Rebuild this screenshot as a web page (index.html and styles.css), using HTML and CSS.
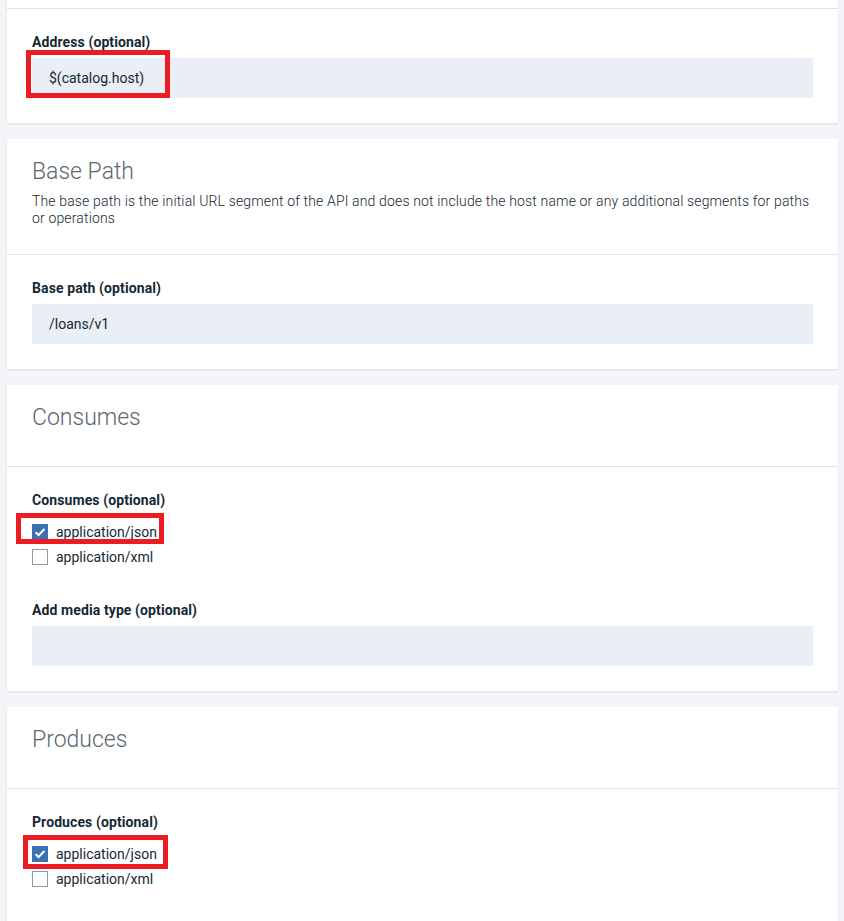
FILE: index.html
```html
<!DOCTYPE html>
<html lang="en">
<head>
<meta charset="utf-8">
<title>API settings</title>
<link rel="stylesheet" href="styles.css">
</head>
<body>
<main class="page">
  <section class="card">
    <div class="card-head stub"></div>
    <div class="card-body">
      <div class="field">
        <label class="label">Address (optional)</label>
        <div class="input-wrap">
          <div class="input">$(catalog.host)</div>
          <span class="mark mark-address"></span>
        </div>
      </div>
    </div>
  </section>

  <section class="card">
    <div class="card-head">
      <h2 class="title">Base Path</h2>
      <p class="desc">The base path is the initial URL segment of the API and does not include the host name or any additional segments for paths or operations</p>
    </div>
    <div class="card-body">
      <div class="field">
        <label class="label">Base path (optional)</label>
        <div class="input-wrap">
          <div class="input">/loans/v1</div>
        </div>
      </div>
    </div>
  </section>

  <section class="card">
    <div class="card-head">
      <h2 class="title">Consumes</h2>
    </div>
    <div class="card-body">
      <div class="field">
        <label class="label label-check">Consumes (optional)</label>
        <div class="check-row">
          <span class="box checked"><svg viewBox="0 0 16 16" width="16" height="16"><path d="M3.6 8.2 L6.6 11 L12.4 5" fill="none" stroke="#fff" stroke-width="2"/></svg></span>
          <span class="check-text">application/json</span>
          <span class="mark mark-consumes"></span>
        </div>
        <div class="check-row">
          <span class="box"></span>
          <span class="check-text">application/xml</span>
        </div>
      </div>
      <div class="field field-gap">
        <label class="label">Add media type (optional)</label>
        <div class="input-wrap">
          <div class="input"></div>
        </div>
      </div>
    </div>
  </section>

  <section class="card">
    <div class="card-head">
      <h2 class="title">Produces</h2>
    </div>
    <div class="card-body card-body-last">
      <div class="field">
        <label class="label label-check">Produces (optional)</label>
        <div class="check-row">
          <span class="box checked"><svg viewBox="0 0 16 16" width="16" height="16"><path d="M3.6 8.2 L6.6 11 L12.4 5" fill="none" stroke="#fff" stroke-width="2"/></svg></span>
          <span class="check-text">application/json</span>
          <span class="mark mark-produces"></span>
        </div>
        <div class="check-row">
          <span class="box"></span>
          <span class="check-text">application/xml</span>
        </div>
      </div>
    </div>
  </section>
</main>
</body>
</html>
```

FILE: styles.css
```css
* { box-sizing: border-box; }

html, body {
  margin: 0;
  padding: 0;
  background: #f4f5f8;
  font-family: Roboto, "Liberation Sans", Arial, sans-serif;
  color: #152935;
}

.page {
  display: flex;
  flex-direction: column;
  gap: 16px;
  padding: 0 6px 0 7px;
}

.card {
  background: #ffffff;
  box-shadow: 0 1px 2px rgba(0, 0, 0, 0.1);
}

.card-head {
  padding: 18px 25px 27px 25px;
  border-bottom: 1px solid #dfe3e6;
}

.card-head.stub {
  height: 9px;
  padding: 0;
}

.title {
  margin: 0 0 6px 0;
  font-size: 23px;
  line-height: 30px;
  font-weight: 300;
  color: #5a6872;
}

.desc {
  margin: 0;
  font-size: 14px;
  line-height: 17px;
  font-weight: 300;
  letter-spacing: 0.15px;
  color: #152935;
}

.card-body {
  padding: 24px 25px 25px 25px;
}

.card-body-last {
  padding-bottom: 48px;
}

.field {
  display: flex;
  flex-direction: column;
}

.field-gap {
  margin-top: 32px;
}

.label {
  font-size: 14px;
  line-height: 18px;
  font-weight: 700;
  letter-spacing: 0.1px;
  color: #152935;
  margin-bottom: 7px;
}

.label-check {
  margin-bottom: 10px;
}

.input-wrap {
  position: relative;
}

.input {
  height: 40px;
  background: #eaeef5;
  padding: 0 17px;
  font-size: 14px;
  line-height: 40px;
  color: #152935;
}

.check-row {
  position: relative;
  display: flex;
  align-items: center;
  gap: 8px;
  height: 25px;
}

.box {
  width: 16px;
  height: 16px;
  border: 1px solid #8c9ba5;
  background: #ffffff;
  display: inline-flex;
  flex: none;
}

.box.checked {
  border: none;
  background: #3d70b2;
}

.box svg { display: block; }

.check-text {
  font-size: 14px;
  line-height: 18px;
  color: #152935;
}

.mark {
  position: absolute;
  border: 5px solid #ec1c24;
  pointer-events: none;
}

.mark-address {
  left: -6px;
  top: -8px;
  width: 144px;
  height: 48px;
}

.mark-consumes {
  left: -16px;
  top: -6px;
  width: 148px;
  height: 31px;
}

.mark-produces {
  left: -9px;
  top: -6px;
  width: 145px;
  height: 34px;
}
```
